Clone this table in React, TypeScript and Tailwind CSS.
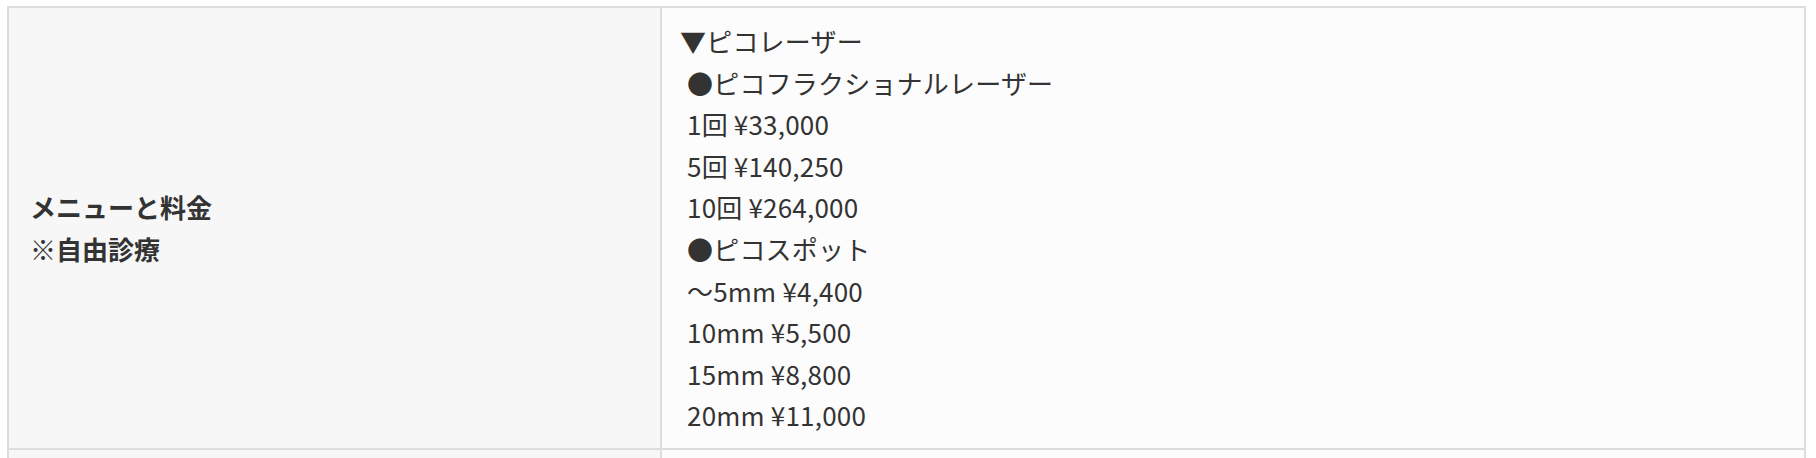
import React from 'react';

const lines = [
  '●ピコフラクショナルレーザー',
  '1回 ¥33,000',
  '5回 ¥140,250',
  '10回 ¥264,000',
  '●ピコスポット',
  '～5mm ¥4,400',
  '10mm ¥5,500',
  '15mm ¥8,800',
  '20mm ¥11,000',
];

export default function App() {
  return (
    <div
      className="min-h-[458px] bg-white pl-[7px] pt-[6px] text-[26px] leading-[1.6] text-[#333]"
      style={{ fontFamily: '"Noto Sans CJK JP", "Noto Sans", sans-serif' }}
    >
      <div className="w-[1799px] border-x-2 border-t-2 border-[#dddddd]">
        {/* Menu & price row */}
        <div className="flex border-b-2 border-[#dddddd]">
          <div className="flex w-[653px] shrink-0 items-center border-r-2 border-[#dddddd] bg-[#f7f7f7] px-[21px] font-bold">
            <div>
              <div>メニューと料金</div>
              <div>※自由診療</div>
            </div>
          </div>
          <div className="flex-1 bg-[#fcfcfc] px-[18px] py-[12px] tracking-[0.2px]">
            <div>▼ピコレーザー</div>
            {lines.map((l, i) => (
              <div key={i} className="pl-[7px]">
                {l}
              </div>
            ))}
          </div>
        </div>
        {/* next row (cut off) */}
        <div className="flex h-[40px]">
          <div className="w-[653px] shrink-0 border-r-2 border-[#dddddd] bg-[#f7f7f7]" />
          <div className="flex-1 bg-[#fcfcfc]" />
        </div>
      </div>
    </div>
  );
}
